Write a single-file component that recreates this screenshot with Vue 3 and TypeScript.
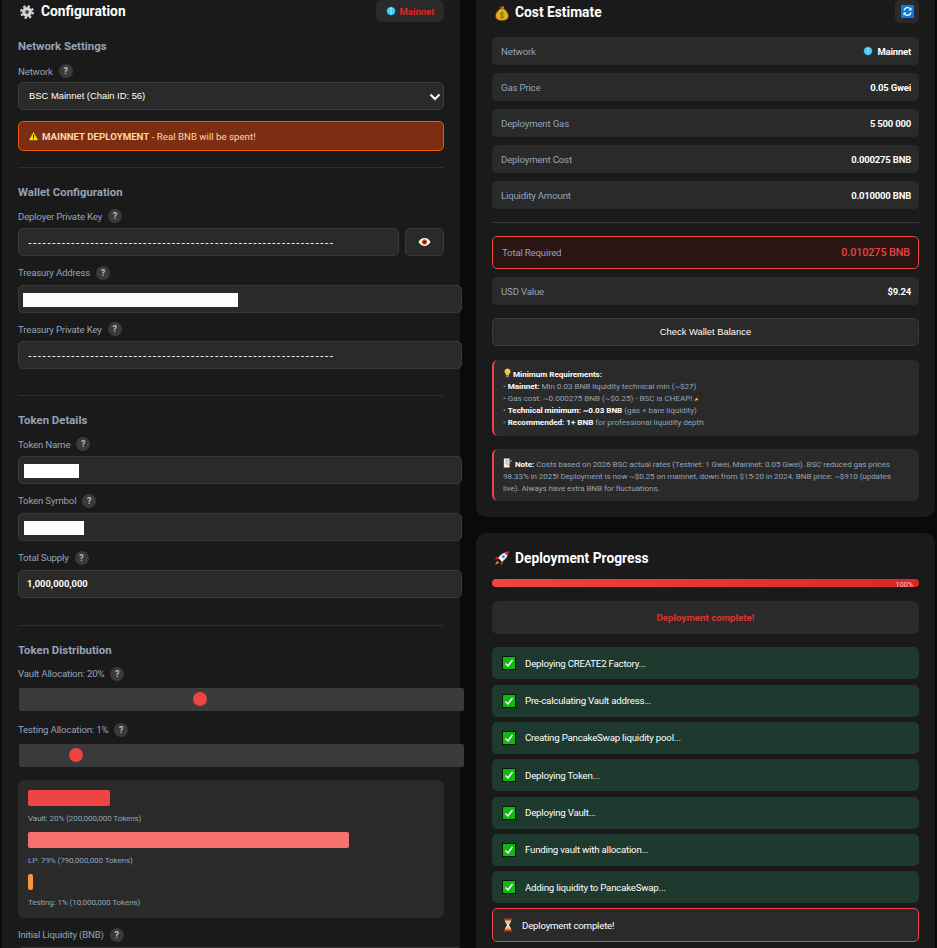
<script setup lang="ts">
const dashes = '-'.repeat(64)
const costRows = [
  { label: 'Gas Price', value: '0.05 Gwei' },
  { label: 'Deployment Gas', value: '5 500 000' },
  { label: 'Deployment Cost', value: '0.000275 BNB' },
  { label: 'Liquidity Amount', value: '0.010000 BNB' },
]
const steps = [
  'Deploying CREATE2 Factory...',
  'Pre-calculating Vault address...',
  'Creating PancakeSwap liquidity pool...',
  'Deploying Token...',
  'Deploying Vault...',
  'Funding vault with allocation...',
  'Adding liquidity to PancakeSwap...',
]
const dist = [
  { label: 'Vault: 20% (200,000,000 Tokens)', width: 82, color: '#ef4444' },
  { label: 'LP: 79% (790,000,000 Tokens)', width: 321, color: '#f87171' },
  { label: 'Testing: 1% (10,000,000 Tokens)', width: 5, color: '#fb923c' },
]
</script>

<template>
  <div class="page">
    <section class="panel left">
      <header class="head">
        <h2 class="title">
          <svg class="ico-title" viewBox="0 0 14 14"><circle cx="7" cy="7" r="4.9" fill="#d8d8d8"/><circle cx="7" cy="7" r="5.8" fill="none" stroke="#d8d8d8" stroke-width="2.2" stroke-dasharray="2.3 2.25"/><circle cx="7" cy="7" r="1.9" fill="#4a4a4a"/></svg>
          Configuration
        </h2>
        <div class="badge">
          <svg class="ico-globe" viewBox="0 0 12 12"><circle cx="6" cy="6" r="5.5" fill="#19b5ea" stroke="#0b3b52"/><path d="M1 6h10M6 1v10M2 3.5h8M2 8.500h8" stroke="#c9f3ff" stroke-width=".8"/></svg>
          Mainnet
        </div>
      </header>

      <h3 class="section first">Network Settings</h3>
      <div class="label">Network <span class="q">?</span></div>
      <div class="select-wrap">
        <select class="select"><option>BSC Mainnet (Chain ID: 56)</option></select>
        <svg class="chev" viewBox="0 0 12 8"><path d="M1.5 1.5 6 6l4.5-4.5" fill="none" stroke="#fff" stroke-width="2"/></svg>
      </div>
      <div class="alert">
        <svg class="ico-warn" viewBox="0 0 12 11"><path d="M6 .6 11.6 10.5H.4Z" fill="#fde100" stroke="#222" stroke-width=".5"/><path d="M6 3.8v3.6M6 8.2v1.1" stroke="#222" stroke-width="1.2"/></svg>
        <span><b>MAINNET DEPLOYMENT</b> - Real BNB will be spent!</span>
      </div>
      <hr class="rule rule-a" />

      <h3 class="section">Wallet Configuration</h3>
      <div class="label">Deployer Private Key <span class="q">?</span></div>
      <div class="key-row">
        <input class="field key-input dash" :value="dashes" readonly />
        <button class="eye-btn" type="button" aria-label="Show key">
          <svg viewBox="0 0 14 10" width="13" height="10"><path d="M.5 5C2.5 1.8 4.6.8 7 .8s4.500 1 6.500 4.200C11.500 8.200 9.400 9.200 7 9.200S2.500 8.200.5 5Z" fill="#fff"/><circle cx="7" cy="5" r="2.900" fill="#d9591a"/><circle cx="7" cy="5" r="1.300" fill="#201008"/></svg>
        </button>
      </div>
      <div class="label">Treasury Address <span class="q">?</span></div>
      <div class="field over tight"><span class="redact" style="width: 215px"></span></div>
      <div class="label">Treasury Private Key <span class="q">?</span></div>
      <input class="field over dash" :value="dashes" readonly />
      <hr class="rule rule-c" />

      <h3 class="section">Token Details</h3>
      <div class="label">Token Name <span class="q">?</span></div>
      <div class="field over"><span class="redact r2" style="width: 55px"></span></div>
      <div class="label">Token Symbol <span class="q">?</span></div>
      <div class="field over"><span class="redact r2" style="width: 60px"></span></div>
      <div class="label">Total Supply <span class="q">?</span></div>
      <input class="field over strong" value="1,000,000,000" readonly />
      <hr class="rule rule-b" />

      <h3 class="section">Token Distribution</h3>
      <div class="label">Vault Allocation: 20% <span class="q">?</span></div>
      <div class="slider"><span class="thumb" style="left: 174px"></span></div>
      <div class="label">Testing Allocation: 1% <span class="q">?</span></div>
      <div class="slider"><span class="thumb" style="left: 50px"></span></div>
      <div class="dist">
        <div v-for="d in dist" :key="d.label" class="dist-item">
          <div class="dist-bar" :style="{ width: d.width + 'px', background: d.color }"></div>
          <div class="dist-label">{{ d.label }}</div>
        </div>
      </div>
      <div class="label liq">Initial Liquidity (BNB) <span class="q">?</span></div>
      <div class="field over"></div>
    </section>

    <div class="right">
      <section class="panel cost">
        <header class="head">
          <h2 class="title">
            <svg class="ico-title" viewBox="0 0 14 16"><path d="M4.500 1 6 2.500 7.500 1 9.500 1.500 8.500 4h-3Z" fill="#b8770e"/><path d="M5 4h4c3 2 4.500 5 4.300 7.500C13 14 11 15.500 7 15.500S1 14 .7 11.500C.5 9 2 6 5 4Z" fill="#f0a818" stroke="#8a5a08" stroke-width=".5"/><path d="M8.800 8.200C7.800 7.300 5.500 7.500 5.500 9s3.200 1.200 3.200 2.700-2.500 1.500-3.500.6M7 6.500v7" fill="none" stroke="#239a24" stroke-width="1"/></svg>
            Cost Estimate
          </h2>
          <button class="refresh" type="button" aria-label="Refresh">
            <svg viewBox="0 0 13 13" width="13" height="13"><rect width="13" height="13" fill="#0a78e0"/><path d="M3 5.500A3.700 3.700 0 0 1 9.700 4.300M10 7.500A3.700 3.700 0 0 1 3.300 8.700" fill="none" stroke="#fff" stroke-width="1.200"/><path d="M10.500 2.500v3h-3ZM2.500 10.500v-3h3Z" fill="#fff"/></svg>
          </button>
        </header>
        <div class="rows">
          <div class="row">
            <span class="k">Network</span>
            <span class="v net">
              <svg class="ico-globe" viewBox="0 0 12 12"><circle cx="6" cy="6" r="5.500" fill="#19b5ea" stroke="#0b3b52"/><path d="M1 6h10M6 1v10M2 3.500h8M2 8.500h8" stroke="#c9f3ff" stroke-width=".8"/></svg>
              Mainnet
            </span>
          </div>
          <div v-for="r in costRows" :key="r.label" class="row">
            <span class="k">{{ r.label }}</span>
            <span class="v">{{ r.value }}</span>
          </div>
        </div>
        <hr class="rule cost-rule" />
        <div class="row total">
          <span class="k">Total Required</span>
          <span class="v big">0.010275 BNB</span>
        </div>
        <div class="row usd">
          <span class="k">USD Value</span>
          <span class="v">$9.24</span>
        </div>
        <button class="check" type="button">Check Wallet Balance</button>
        <div class="info">
          <div>
            <svg class="ico-inline bulb" viewBox="0 0 10 12"><path d="M5 .5a3.600 3.600 0 0 0-2 6.600V9h4V7.100A3.600 3.600 0 0 0 5 .5Z" fill="#f6c544"/><path d="M3.300 9.500h3.400v1.500H3.300Z" fill="#8a8a8a"/></svg>
            <b>Minimum Requirements:</b>
          </div>
          <div>• <b>Mainnet:</b> Min 0.03 BNB liquidity technical min (~$27)</div>
          <div>• Gas cost: ~0.000275 BNB (~$0.25) - BSC is CHEAP!
            <svg class="ico-inline" viewBox="0 0 10 10"><path d="M9.500.5C6.500 1 4 3 2.500 5.500l2 2C7 6 9 3.500 9.500.5Z" fill="#222"/><path d="M2.500 5.500 5 8 .5 9.500Z" fill="#f6b73c"/><path d="M4 3 6 5" stroke="#d33" stroke-width="1"/></svg>
          </div>
          <div>• <b>Technical minimum: ~0.03 BNB</b> (gas + bare liquidity)</div>
          <div>• <b>Recommended: 1+ BNB</b> for professional liquidity depth</div>
        </div>
        <div class="info note">
          <svg class="ico-inline memo" viewBox="0 0 11 12"><path d="M1 .5h7v11H1Z" fill="#f1f1f1"/><path d="M2.500 3h4M2.500 5h4M2.500 7h3" stroke="#777" stroke-width=".7"/><path d="M10.500 2 5.500 8 4.500 9.500 6.200 8.800l5-6Z" fill="#e0a030"/></svg>
          <b>Note:</b> Costs based on 2026 BSC actual rates (Testnet: 1 Gwei, Mainnet: 0.05 Gwei). BSC reduced gas prices 98.33% in 2025! Deployment is now ~$0.25 on mainnet, down from $15-20 in 2024. BNB price: ~$910 (updates live). Always have extra BNB for fluctuations.
        </div>
      </section>

      <section class="panel deploy">
        <h2 class="title deploy-title">
          <svg class="ico-rocket" viewBox="0 0 16 16"><path d="M6 6 2.500 6.500 1 9l3.500-.5ZM10 10l-.5 3.500L7 15l.5-3.500Z" fill="#d8232a"/><path d="M15.500.5C11 1 7.500 3 4.500 7.500l4 4C13 8.500 15 5 15.500.5Z" fill="#eef3f6"/><path d="M15.500.5c-1.800.2-3.300.6-4.600 1.300l3.300 3.300c.7-1.300 1.100-2.800 1.300-4.600Z" fill="#d8232a"/><circle cx="10" cy="6" r="1.500" fill="#2f8fd6"/><path d="M3.500 10.500 5.500 12.500 1 15Z" fill="#f08a24"/></svg>
          Deployment Progress
        </h2>
        <div class="progress"><span>100%</span></div>
        <div class="status">Deployment complete!</div>
        <div class="steps">
          <div v-for="s in steps" :key="s" class="step">
            <svg class="ico-check" viewBox="0 0 14 14"><rect x=".5" y=".5" width="13" height="13" fill="#12b812" stroke="#061a06"/><path d="M3.500 7.500 6 10l4.500-6" fill="none" stroke="#fff" stroke-width="1.400"/></svg>
            {{ s }}
          </div>
          <div class="step current">
            <svg class="ico-hour" viewBox="0 0 10 14"><path d="M1 .5h8v2H1ZM1 11.500h8v2H1Z" fill="#c8321f"/><path d="M2 2.500h6C8 5 6 6 6 7s2 2 2 4.500H2C2 9 4 8 4 7S2 5 2 2.500Z" fill="#f7ecd8"/><path d="M3 3.500h4L5 6ZM2.800 11 5 8.500 7.200 11Z" fill="#f0a040"/></svg>
            Deployment complete!
          </div>
        </div>
      </section>
    </div>
  </div>
</template>

<style>
html, body { margin: 0; height: 948px; overflow: hidden; background: #0a0a0a; }
</style>

<style scoped>
.page {
  display: grid;
  grid-template-columns: 458px 459px;
  gap: 16px;
  padding: 0 2px;
  height: 948px;
  overflow: hidden;
  background: #0a0a0a;
  font-family: Roboto, "Noto Sans", sans-serif;
  font-size: 9.7px;
  color: #94a3b8;
  align-items: start;
}
.panel { background: #1a1a1a; padding: 0 16px; box-sizing: border-box; }
.left { height: 1000px; }
.right { display: flex; flex-direction: column; gap: 16px; }
.cost { height: 517px; border-radius: 0 0 10px 10px; }
.deploy { height: 440px; border-radius: 10px 10px 0 0; padding-top: 15px; }
.head { display: flex; justify-content: space-between; align-items: flex-start; height: 23px; }
.title {
  display: flex; align-items: center; gap: 7px;
  margin: 0; font-size: 13.8px; font-weight: 700; color: #fff; line-height: 23px;
}
.ico-title { width: 14px; height: 14px; margin-left: 2px; flex: none; }
.cost .title { margin-top: 1px; }
.cost .ico-title { height: 16px; margin-right: -1px; margin-left: 3px; }
.badge {
  display: flex; align-items: center; gap: 4px;
  background: #2a2a2a; border-radius: 6px; height: 22px; width: 68px;
  justify-content: center; box-sizing: border-box;
  color: #dc2626; font-weight: 700; font-size: 9.5px;
}
.ico-globe { width: 10px; height: 10px; flex: none; }
.section { margin: 0 0 7px; font-size: 11.4px; font-weight: 700; color: #94a3b8; line-height: 14px; height: 16px; }
.section.first { margin-top: 16px; margin-bottom: 8px; }
.label { display: flex; align-items: center; gap: 6px; height: 16px; margin-bottom: 4px; font-size: 9.7px; letter-spacing: -0.2px; color: #94a3b8; }
.q {
  width: 14px; height: 14px; border-radius: 50%; background: #3a3a3a; color: #b4bcc8; letter-spacing: 0;
  display: inline-flex; align-items: center; justify-content: center; font-size: 9px; font-weight: 700;
}
.select-wrap { position: relative; height: 28px; margin-top: -1px; }
.select {
  width: 100%; height: 28px; background: #2a2a2a; border: 1px solid #3a3a3a; border-radius: 5px;
  color: #fff; font: 500 9.4px "Liberation Sans", sans-serif; padding: 0 10px 2px; appearance: none; display: block;
}
.chev { position: absolute; right: 3px; top: 11px; width: 12px; height: 8px; pointer-events: none; }
.alert {
  display: flex; align-items: center; gap: 3px;
  margin-top: 11px; height: 30px; box-sizing: border-box;
  background: #7c2d12; border: 1px solid #ea580c; border-radius: 5px; padding: 0 9px;
  color: #fed7aa; font-size: 9.7px;
}
.alert b { font-weight: 700; }
.ico-warn { width: 11px; height: 10px; flex: none; }
.rule { border: 0; border-top: 1px solid #2e2e2e; margin: 0; }
.rule-a { margin: 16px 0 17px; }
.rule-b { margin: 27px 0 17px; }
.rule-c { margin: 26px 0 17px; }
.field {
  display: block; height: 28px; box-sizing: border-box; background: #2a2a2a; border: 1px solid #3a3a3a;
  border-radius: 5px; color: #fff; font: 9.4px "Liberation Sans", sans-serif; padding: 0 9px; margin-bottom: 8.8px; outline: none;
}
.over { width: 444px; position: relative; }
.tight { margin-bottom: 8.4px; }
.dash { letter-spacing: 1.06px; font-size: 11.2px; }
.strong { font: 700 9.4px Roboto, sans-serif; padding: 0 8px; }
.key-row { display: flex; gap: 6px; margin-bottom: 8.8px; }
.key-input { flex: 1; margin: 0; min-width: 0; }
.eye-btn {
  width: 39px; height: 28px; box-sizing: border-box; background: #2a2a2a; border: 1px solid #3a3a3a; border-radius: 5px;
  display: flex; align-items: center; justify-content: center; padding: 0;
}
.redact { position: absolute; left: 4px; top: 7px; height: 14px; background: #fff; }
.r2 { left: 5px; }
.slider {
  position: relative; width: 445px; height: 23px; margin: 6px 0 11px 1px; background: #3a3a3a; border-radius: 2px;
}
.thumb { position: absolute; top: 4.5px; width: 14px; height: 14px; border-radius: 50%; background: #ef4444; }
.dist { margin-top: 13px; background: #2a2a2a; border-radius: 6px; padding: 10px; height: 138px; box-sizing: border-box; }
.dist-item { margin-bottom: 8px; }
.dist-bar { height: 16px; border-radius: 2px; }
.dist-label { font-size: 8.1px; line-height: 12px; margin-top: 6px; letter-spacing: -0.12px; color: #94a3b8; }
.liq { margin-top: 9px; }

.refresh { width: 24px; height: 23px; border: 0; background: #2a2a2a; border-radius: 5px; padding: 0; display: flex; align-items: center; justify-content: center; }
.rows { display: flex; flex-direction: column; gap: 8px; margin-top: 14px; }
.row {
  display: flex; justify-content: space-between; align-items: center; height: 28px; box-sizing: border-box;
  background: #2a2a2a; border-radius: 5px; padding: 0 8px 0 9px;
}
.k { font-size: 9.7px; letter-spacing: -0.2px; color: #94a3b8; }
.v { font-size: 9.5px; letter-spacing: -0.2px; font-weight: 700; color: #fff; }
.net { display: inline-flex; align-items: center; gap: 4px; }
.cost-rule { margin: 13px 0 13px; border-top-color: #3a3a3a; }
.total { height: 33px; background: #2a1515; border: 1px solid #ef4444; }
.big { font-size: 10.8px; letter-spacing: -0.1px; color: #ef4444; font-weight: 500; }
.usd { margin-top: 8px; }
.check {
  display: block; width: 100%; height: 28px; margin-top: 13px; padding: 0 0 2px; box-sizing: border-box; background: #2a2a2a; border: 1px solid #3a3a3a;
  border-radius: 5px; color: #fff; font: 500 9.4px "Liberation Sans", sans-serif;
}
.info {
  margin-top: 14px; background: #2a2a2a; border-left: 2px solid #ef4444; border-radius: 6px;
  padding: 8px 9px; font-size: 8.1px; line-height: 12px; color: #94a3b8; box-sizing: border-box; letter-spacing: -0.03px;
}
.info b { color: #fff; font-weight: 700; }
.note { margin-top: 13px; height: 52px; padding: 9px 18px 0 9px; letter-spacing: -0.09px; }
.ico-inline { width: 9px; height: 10px; vertical-align: -1px; }
.bulb { margin-right: 1px; }
.memo { margin-right: 3px; }
.deploy-title { line-height: 20px; gap: 6px; }
.ico-rocket { width: 15px; height: 15px; margin-left: 2px; flex: none; }
.progress {
  margin-top: 11px; height: 8px; border-radius: 4px; display: flex; justify-content: flex-end; align-items: center;
  background: linear-gradient(90deg, #ef4444, #dc2626); padding: 2px 6px 0 0; box-sizing: border-box; font-size: 7.2px; color: #f3c3c3;
}
.status {
  margin-top: 14px; height: 33px; display: flex; align-items: center; justify-content: center;
  background: #2a2a2a; border-radius: 6px; color: #e03131; font-size: 9.7px; font-weight: 700;
}
.steps { margin-top: 13.4px; display: flex; flex-direction: column; gap: 5.3px; }
.step {
  display: flex; align-items: center; gap: 9px; height: 32px; box-sizing: border-box; padding: 0 10px;
  background: #1e3a2e; border-radius: 5px; color: #fff; font-size: 9.7px; letter-spacing: -0.22px;
}
.ico-check { width: 14px; height: 14px; flex: none; }
.current { height: 34px; background: #2a2a2a; border: 1px solid #ef4444; padding: 0 10px; gap: 9px; }
.ico-hour { width: 10px; height: 14px; flex: none; }
</style>
